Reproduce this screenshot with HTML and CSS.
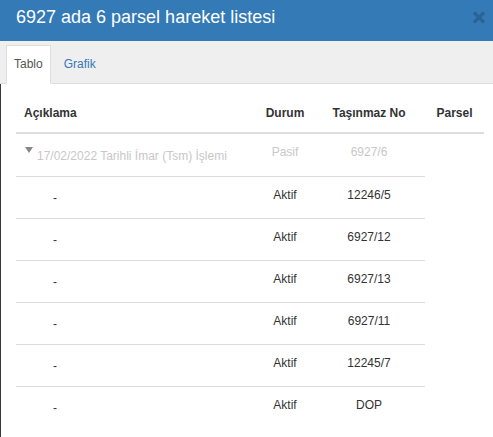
FILE: index.html
```html
<!DOCTYPE html>
<html lang="tr">
<head>
<meta charset="utf-8">
<title>6927 ada 6 parsel hareket listesi</title>
<link rel="stylesheet" href="styles.css">
</head>
<body>
<div class="modal">
  <div class="modal-header">
    <h4 class="modal-title">6927 ada 6 parsel hareket listesi</h4>
    <button class="close" aria-label="Kapat">
      <svg width="14" height="13" viewBox="0 0 14 13"><path d="M2 1.5 L12 11.5 M12 1.5 L2 11.5" stroke="#2c6296" stroke-width="3.2" stroke-linecap="butt"/></svg>
    </button>
  </div>
  <ul class="tabs">
    <li class="tab active">Tablo</li>
    <li class="tab">Grafik</li>
  </ul>
  <div class="tab-content">
    <table class="grid">
      <colgroup>
        <col class="c-desc"><col class="c-durum"><col class="c-no"><col class="c-parsel">
      </colgroup>
      <thead>
        <tr>
          <th class="left">Açıklama</th>
          <th>Durum</th>
          <th>Taşınmaz No</th>
          <th>Parsel</th>
        </tr>
      </thead>
      <tbody>
        <tr class="passive">
          <td class="desc parent"><span class="caret"></span>17/02/2022 Tarihli İmar (Tsm) İşlemi</td>
          <td>Pasif</td>
          <td>6927/6</td>
        </tr>
        <tr><td class="desc child">-</td><td>Aktif</td><td>12246/5</td></tr>
        <tr><td class="desc child">-</td><td>Aktif</td><td>6927/12</td></tr>
        <tr><td class="desc child">-</td><td>Aktif</td><td>6927/13</td></tr>
        <tr><td class="desc child">-</td><td>Aktif</td><td>6927/11</td></tr>
        <tr><td class="desc child">-</td><td>Aktif</td><td>12245/7</td></tr>
        <tr class="last"><td class="desc child">-</td><td>Aktif</td><td>DOP</td></tr>
      </tbody>
    </table>
  </div>
</div>
</body>
</html>
```
FILE: styles.css
```css
html, body {
  margin: 0;
  padding: 0;
  height: 100%;
}
body {
  background: #fff;
  font-family: "Liberation Sans", Arial, sans-serif;
  font-size: 12px;
  color: #333;
  overflow: hidden;
}
.modal {
  display: flex;
  flex-direction: column;
  height: 100%;
}
.modal-header {
  background: #337ab7;
  display: flex;
  align-items: flex-start;
  padding: 7px 7px 14px 16px;
}
.modal-title {
  margin: 0;
  font-size: 18px;
  line-height: 20px;
  font-weight: normal;
  color: #fff;
}
.close {
  margin-left: auto;
  margin-top: 4px;
  padding: 0;
  border: 0;
  background: transparent;
  display: block;
  width: 14px;
  height: 13px;
}
.close svg { display: block; }
.tabs {
  list-style: none;
  margin: 0;
  padding: 4px 0 0 6px;
  background: #efefef;
  border-bottom: 1px solid #dddddd;
  display: flex;
  gap: 2px;
}
.tab {
  padding: 10px 10px;
  line-height: 17px;
  border: 1px solid transparent;
  margin-bottom: -1px;
  color: #337ab7;
}
.tab.active {
  background: #fff;
  color: #555;
  padding: 10px 7px;
  border-color: #dddddd #dddddd #fff;
}
.tab-content {
  flex: 1;
  border-left: 1px solid #3a3a3a;
  padding: 13px 9px 0 15px;
}
.grid {
  border-collapse: collapse;
  width: 468px;
  table-layout: fixed;
}
.c-desc { width: 241px; }
.c-durum { width: 56px; }
.c-no { width: 112px; }
.c-parsel { width: 59px; }
.grid th {
  font-weight: bold;
  color: #333;
  line-height: 17px;
  padding: 8px 8px 10px;
  text-align: center;
  vertical-align: bottom;
  border-bottom: 2px solid #dddddd;
  white-space: nowrap;
}
.grid th.left { text-align: left; }
.grid td {
  line-height: 17px;
  padding: 10px 8px 0;
  text-align: center;
  vertical-align: top;
  border-bottom: 1px solid #dddddd;
  white-space: nowrap;
}
.grid td.desc {
  text-align: left;
  padding: 13px 8px 11px 9px;
}
.grid td.child { padding-left: 37px; }
.grid tr.last td { border-bottom: 0; }
.passive td { color: #c8c8c8; }
.caret {
  display: inline-block;
  width: 0;
  height: 0;
  border-left: 4px solid transparent;
  border-right: 4px solid transparent;
  border-top: 6px solid #888888;
  vertical-align: 7px;
  margin-right: 4px;
}
```
